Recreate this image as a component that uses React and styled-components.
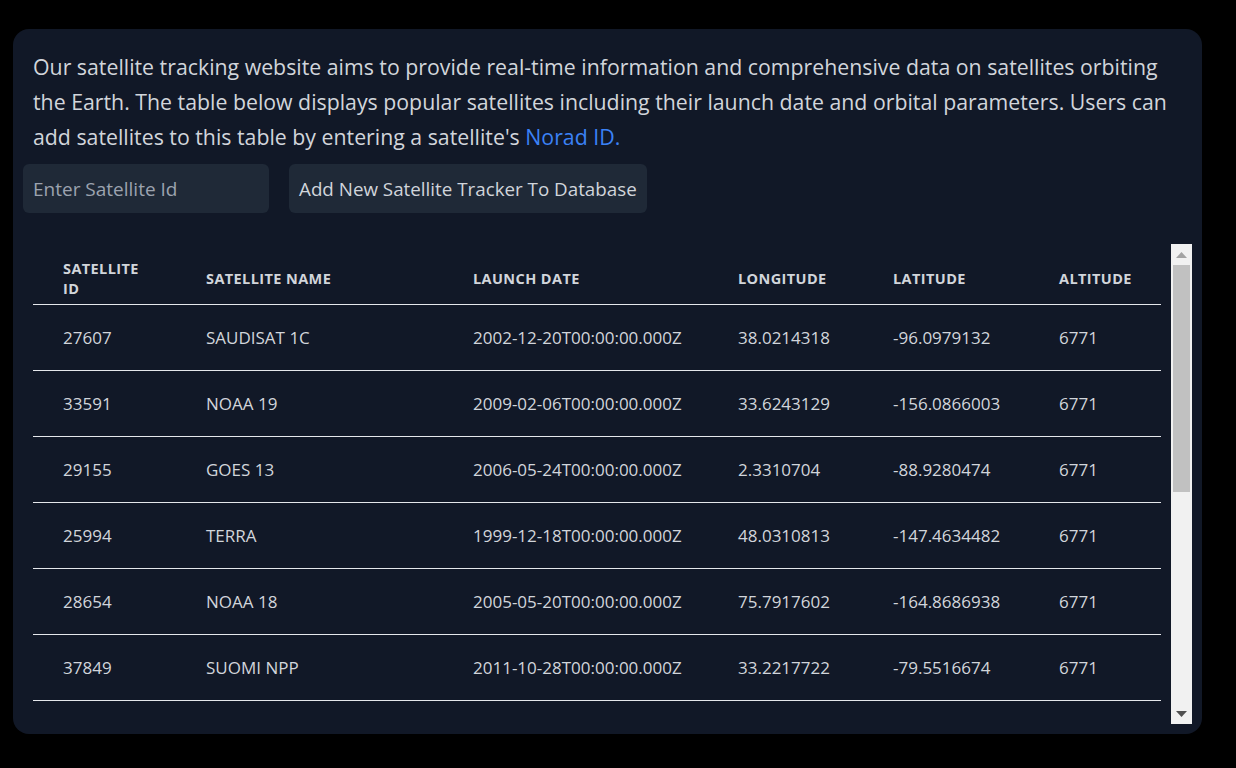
import styled, { createGlobalStyle } from "styled-components";

const GlobalStyle = createGlobalStyle`
  html, body {
    margin: 0;
    padding: 0;
    background: #000;
    font-family: "Open Sans", "Noto Sans", sans-serif;
  }
`;

const Page = styled.div`
  padding: 29px 34px 34px 13px;
`;

const Card = styled.section`
  background: #111827;
  border-radius: 16px;
  padding: 20px 10px 10px 10px;
  display: flex;
  flex-direction: column;
`;

const Intro = styled.p`
  margin: 0 10px 10px 10px;
  color: #d1d5db;
  font-size: 21.3px;
  line-height: 35px;
`;

const NoradLink = styled.a`
  color: #3b82f6;
  text-decoration: none;
`;

const Controls = styled.div`
  display: flex;
  gap: 20px;
  margin-bottom: 31px;
`;

const IdInput = styled.input`
  width: 246px;
  height: 49px;
  box-sizing: border-box;
  background: #1f2937;
  border: none;
  border-radius: 6px;
  padding: 0 10px;
  font-family: inherit;
  font-size: 19px;
  color: #d1d5db;
  outline: none;
  &::placeholder {
    color: #9ca3af;
  }
`;

const AddButton = styled.button`
  height: 49px;
  background: #1f2937;
  border: none;
  border-radius: 6px;
  padding: 0 10px;
  font-family: inherit;
  font-size: 18.8px;
  color: #d1d5db;
  cursor: pointer;
`;

const TableArea = styled.div`
  display: flex;
  gap: 10px;
  height: 480px;
  margin-left: 10px;
`;

const TableViewport = styled.div`
  width: 1129px;
  overflow: hidden;
`;

const ScrollBar = styled.div`
  width: 21px;
  background: #f1f1f1;
  display: flex;
  flex-direction: column;
`;

const ScrollArrow = styled.div`
  height: 21px;
  display: flex;
  align-items: center;
  justify-content: center;
`;

const ScrollTrack = styled.div`
  flex: 1;
  padding: 0 2px;
`;

const ScrollThumb = styled.div`
  height: 227px;
  background: #c1c1c1;
`;

const Table = styled.table`
  width: 100%;
  border-collapse: collapse;
  table-layout: fixed;
`;

const HeadCell = styled.th`
  width: ${(p) => p.w}px;
  height: 60px;
  padding: 15px 30px 5px 30px;
  box-sizing: border-box;
  text-align: left;
  vertical-align: middle;
  color: #d1d5db;
  font-size: 14.5px;
  line-height: 20px;
  font-weight: 700;
  letter-spacing: 0.4px;
  text-transform: uppercase;
  border-bottom: 1px solid #e5e7eb;
`;

const Row = styled.tr`
  border-bottom: 1px solid #e5e7eb;
`;

const Cell = styled.td`
  height: 65px;
  padding: 0 30px;
  color: #d1d5db;
  font-size: 17px;
  white-space: nowrap;
`;

const Arrow = ({ up, color }) => (
  <svg width="11" height="6" viewBox="0 0 11 6">
    <path d={up ? "M0 6h11L5.5 0z" : "M0 0h11L5.5 6z"} fill={color} />
  </svg>
);

const columns = [
  ["Satellite Id", 143],
  ["Satellite Name", 267],
  ["Launch Date", 265],
  ["Longitude", 155],
  ["Latitude", 166],
  ["Altitude", 133],
];

const satellites = [
  ["27607", "SAUDISAT 1C", "2002-12-20T00:00:00.000Z", "38.0214318", "-96.0979132", "6771"],
  ["33591", "NOAA 19", "2009-02-06T00:00:00.000Z", "33.6243129", "-156.0866003", "6771"],
  ["29155", "GOES 13", "2006-05-24T00:00:00.000Z", "2.3310704", "-88.9280474", "6771"],
  ["25994", "TERRA", "1999-12-18T00:00:00.000Z", "48.0310813", "-147.4634482", "6771"],
  ["28654", "NOAA 18", "2005-05-20T00:00:00.000Z", "75.7917602", "-164.8686938", "6771"],
  ["37849", "SUOMI NPP", "2011-10-28T00:00:00.000Z", "33.2217722", "-79.5516674", "6771"],
  ["25544", "SPACE STATION", "1998-11-20T00:00:00.000Z", "-12.4417023", "31.2708419", "6771"],
  ["20580", "HST", "1990-04-24T00:00:00.000Z", "18.9920487", "-43.0155711", "6771"],
  ["43013", "NOAA 20", "2017-11-18T00:00:00.000Z", "-55.3901877", "102.6338154", "6771"],
  ["36411", "GOES 15", "2010-03-04T00:00:00.000Z", "0.0824183", "-60.5125369", "6771"],
  ["39084", "LANDSAT 8", "2013-02-11T00:00:00.000Z", "64.2155072", "12.8803436", "6771"],
  ["41866", "GOES 16", "2016-11-19T00:00:00.000Z", "0.0316205", "-75.2084129", "6771"],
  ["27424", "AQUA", "2002-05-04T00:00:00.000Z", "-22.6603818", "140.3912027", "6771"],
];

export default function App() {
  return (
    <>
      <GlobalStyle />
      <Page>
        <Card>
          <Intro>
            Our satellite tracking website aims to provide real-time information and
            comprehensive data on satellites orbiting the Earth. The table below displays
            popular satellites including their launch date and orbital parameters. Users can
            add satellites to this table by entering a satellite's{" "}
            <NoradLink href="#">Norad ID.</NoradLink>
          </Intro>
          <Controls>
            <IdInput placeholder="Enter Satellite Id" />
            <AddButton>Add New Satellite Tracker To Database</AddButton>
          </Controls>
          <TableArea>
            <TableViewport>
              <Table>
                <thead>
                  <tr>
                    {columns.map(([label, w]) => (
                      <HeadCell key={label} w={w}>{label}</HeadCell>
                    ))}
                  </tr>
                </thead>
                <tbody>
                  {satellites.map((s) => (
                    <Row key={s[0]}>
                      {s.map((v, i) => (
                        <Cell key={i}>{v}</Cell>
                      ))}
                    </Row>
                  ))}
                </tbody>
              </Table>
            </TableViewport>
            <ScrollBar>
              <ScrollArrow>
                <Arrow up color="#a3a3a3" />
              </ScrollArrow>
              <ScrollTrack>
                <ScrollThumb />
              </ScrollTrack>
              <ScrollArrow>
                <Arrow color="#505050" />
              </ScrollArrow>
            </ScrollBar>
          </TableArea>
        </Card>
      </Page>
    </>
  );
}
